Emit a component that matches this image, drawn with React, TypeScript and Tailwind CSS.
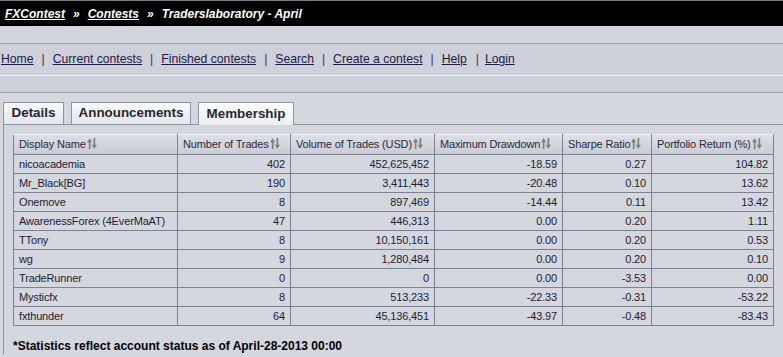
import React from "react";

const rows: [string, string, string, string, string, string][] = [
  ["nicoacademia", "402", "452,625,452", "-18.59", "0.27", "104.82"],
  ["Mr_Black[BG]", "190", "3,411,443", "-20.48", "0.10", "13.62"],
  ["Onemove", "8", "897,469", "-14.44", "0.11", "13.42"],
  ["AwarenessForex (4EverMaAT)", "47", "446,313", "0.00", "0.20", "1.11"],
  ["TTony", "8", "10,150,161", "0.00", "0.20", "0.53"],
  ["wg", "9", "1,280,484", "0.00", "0.20", "0.10"],
  ["TradeRunner", "0", "0", "0.00", "-3.53", "0.00"],
  ["Mysticfx", "8", "513,233", "-22.33", "-0.31", "-53.22"],
  ["fxthunder", "64", "45,136,451", "-43.97", "-0.48", "-83.43"],
];

const headers = [
  "Display Name",
  "Number of Trades",
  "Volume of Trades (USD)",
  "Maximum Drawdown",
  "Sharpe Ratio",
  "Portfolio Return (%)",
];

const widths = [164, 113, 144, 128, 89, 122];

function SortIcon() {
  return (
    <svg width="10" height="11" viewBox="0 0 10 11" className="inline-block ml-[1px] -mt-[3px] align-middle">
      <polygon points="0,4.2 2.6,0.3 5.2,4.2" fill="#76866f" />
      <rect x="1.8" y="3" width="1.7" height="8" fill="#76866f" />
      <rect x="6.5" y="0" width="1.7" height="7.5" fill="#76866f" />
      <polygon points="4.7,6.8 7.35,10.7 10,6.8" fill="#76866f" />
    </svg>
  );
}

const navItems = ["Home", "Current contests", "Finished contests", "Search", "Create a contest", "Help", "Login"];

export default function App() {
  return (
    <div
      className="min-h-screen w-[783px] h-[357px] overflow-hidden bg-[#d4d7de]"
      style={{ fontFamily: '"Liberation Sans", Arial, sans-serif' }}
    >
      <div className="h-px bg-[#7a7a7a]" />
      <div className="h-[25px] bg-black flex items-center pl-[5px] text-white font-bold italic text-[12px] gap-[8px]">
        <span className="underline">FXContest</span>
        <span>»</span>
        <span className="underline">Contests</span>
        <span>»</span>
        <span>Traderslaboratory - April</span>
      </div>
      <div className="h-[17px] bg-[#d2d5dc]" />
      <div className="h-[32px] border-t border-[#9a9ea8] bg-[#ced1d9] flex items-center text-[12.2px] text-[#1a1a48]">
        <div className="flex items-center pl-px">
          {navItems.map((n, i) => (
            <React.Fragment key={n}>
              {i > 0 && (
                <span className={"text-[#4a2a5a] " + (n === "Login" ? "ml-[9px] mr-[6px]" : "mx-[8px]")}>|</span>
              )}
              <span className="underline">{n}</span>
            </React.Fragment>
          ))}
        </div>
      </div>
      <div className="h-[18px] border-t border-[#eef0f3] border-b border-b-[#9a9ca4] bg-[#cdd0d8]" />
      <div className="h-[9px]" />
      <div className="flex items-end pl-[3px] gap-[7px] h-[22px] text-[13.4px] font-bold text-[#2a2630]">
        <div className="h-[22px] w-[61px] border border-b-0 border-[#8e95a2] bg-gradient-to-b from-[#f7f8f9] to-[#e4e7eb] flex items-center justify-center">
          Details
        </div>
        <div className="h-[22px] w-[120px] border border-b-0 border-[#8e95a2] bg-gradient-to-b from-[#f7f8f9] to-[#e4e7eb] flex items-center justify-center">
          Announcements
        </div>
        <div className="relative z-10 h-[23px] -mb-px w-[96px] border border-b-0 border-[#8e95a2] bg-gradient-to-b from-white to-[#eceef1] flex items-center justify-center pt-[1px]">
          Membership
        </div>
      </div>
      <div className="ml-[3px] border-t border-l border-[#8e95a2] pl-[9px] pt-[9px]">
        <table className="table-fixed border-collapse w-[760px] text-[11px] tracking-[-0.15px] text-[#1c1c34]">
          <colgroup>
            {widths.map((w, i) => (
              <col key={i} style={{ width: w }} />
            ))}
          </colgroup>
          <thead>
            <tr className="h-[20px] bg-gradient-to-b from-[#dcdfe5] to-[#c9ccd4]">
              {headers.map((h) => (
                <th
                  key={h}
                  className="border border-[#7c8494] border-t-[#f2f3f5] font-normal text-left pl-[5px] whitespace-nowrap text-[#2a2a3c]"
                >
                  {h}
                  <SortIcon />
                </th>
              ))}
            </tr>
          </thead>
          <tbody>
            {rows.map((r) => (
              <tr key={r[0]} className="h-[19px]">
                {r.map((c, i) => (
                  <td
                    key={i}
                    className={
                      "border border-[#7c8494] whitespace-nowrap leading-[18px] " +
                      (i === 0 ? "text-left pl-[5px]" : "text-right pr-[5px]")
                    }
                  >
                    {c}
                  </td>
                ))}
              </tr>
            ))}
          </tbody>
        </table>
        <div className="mt-[12px] text-[12px] font-bold text-black leading-[16px]">
          *Statistics reflect account status as of April-28-2013 00:00
        </div>
      </div>
    </div>
  );
}
